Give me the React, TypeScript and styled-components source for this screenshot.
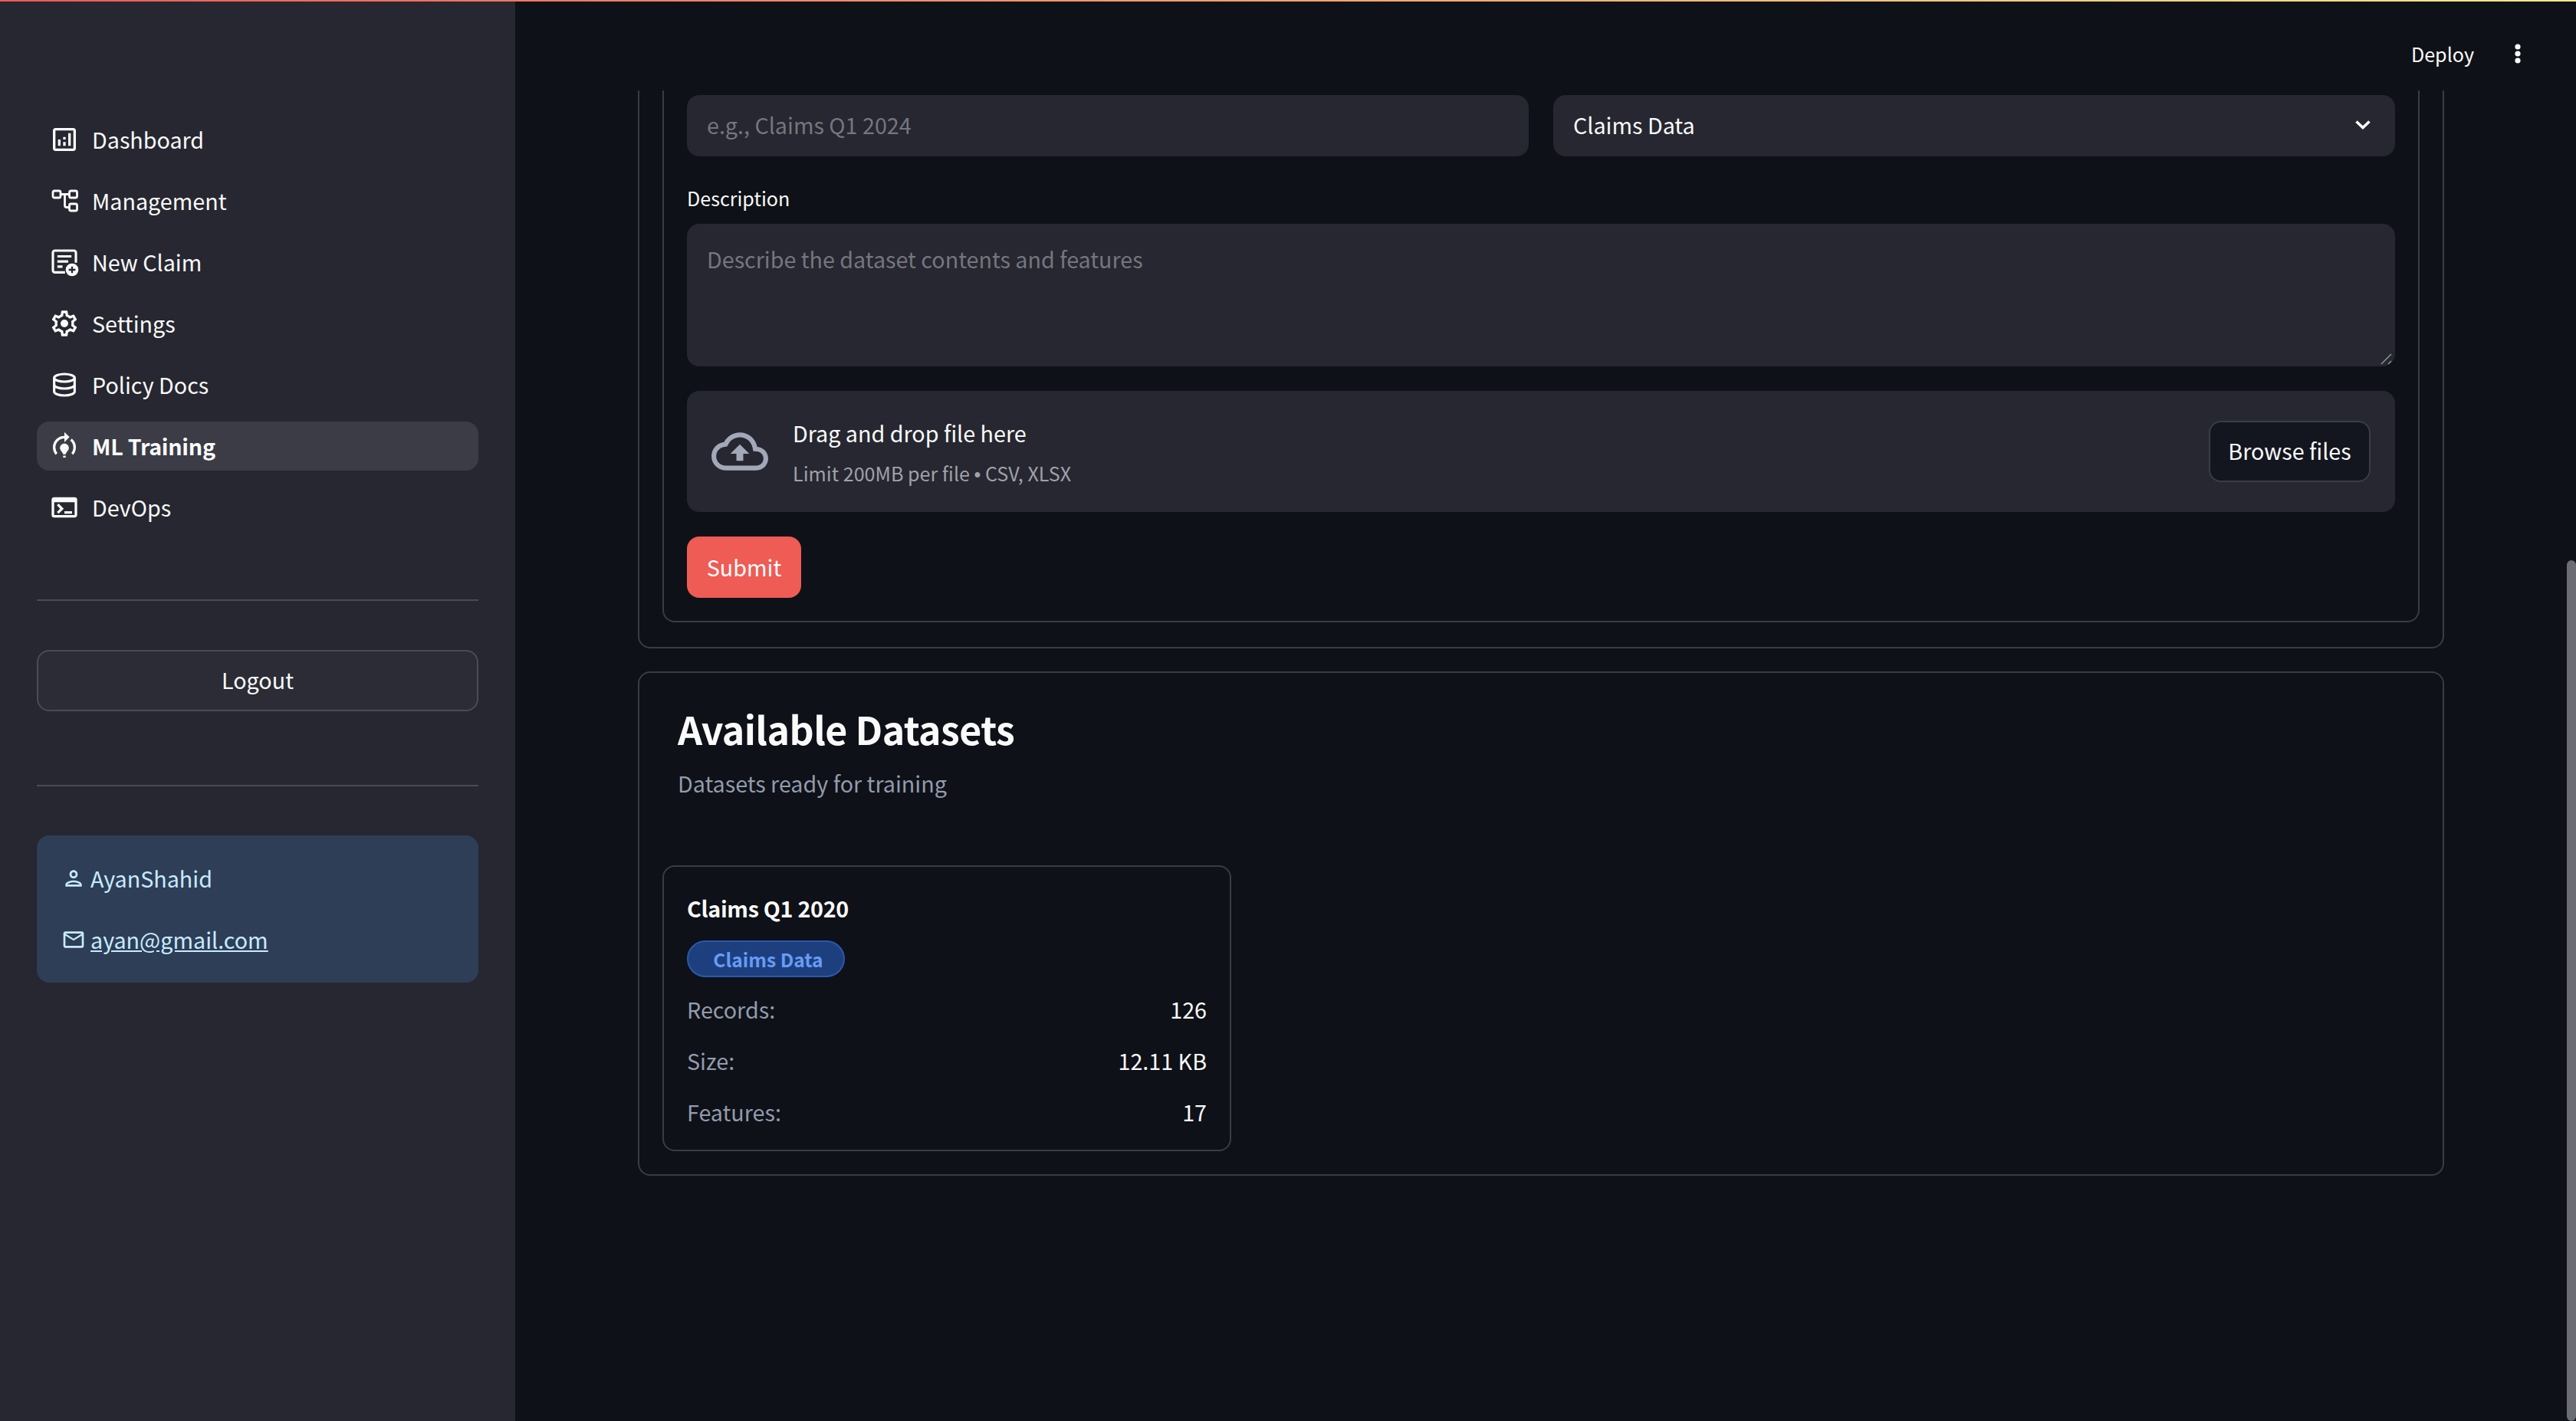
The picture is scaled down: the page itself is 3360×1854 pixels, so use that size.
import React from "react";
import styled, { createGlobalStyle } from "styled-components";
import {
  MdOutlineAnalytics,
  MdOutlineModelTraining,
  MdOutlineTerminal,
  MdOutlinePerson,
  MdMailOutline,
} from "react-icons/md";

const GlobalStyle = createGlobalStyle`
  html, body {
    margin: 0;
    padding: 0;
    background: #0e1117;
  }
  * {
    box-sizing: border-box;
  }
  body {
    font-family: "Noto Sans CJK SC", "Noto Sans", sans-serif;
    color: #fafafa;
  }
`;

function ManagementIcon() {
  return (
    <svg width="40" height="40" viewBox="0 0 40 40" fill="none" stroke="currentColor" strokeWidth="2.8">
      <rect x="5" y="7" width="10" height="9" rx="2" />
      <rect x="26.5" y="7" width="10" height="9" rx="2" />
      <rect x="26.5" y="24" width="10" height="9" rx="2" />
      <path d="M15 11.5H26.5M20.5 11.5V26C20.5 27.6 21.4 28.5 23 28.5H26.5" />
    </svg>
  );
}

function NewClaimIcon() {
  return (
    <svg width="40" height="40" viewBox="0 0 24 24" fill="none">
      <path
        d="M12.5 20H4.5C3.7 20 3 19.3 3 18.5V4.5C3 3.7 3.7 3 4.5 3H19.5C20.3 3 21 3.7 21 4.5V12.5"
        stroke="currentColor"
        strokeWidth="1.9"
      />
      <path d="M6.5 7.5H17.5M6.5 11.5H15M6.5 15.5H10.5" stroke="currentColor" strokeWidth="1.9" />
      <circle cx="18" cy="18" r="5" fill="currentColor" />
      <path d="M18 15.4V20.6M15.4 18H20.6" stroke="#262730" strokeWidth="1.4" />
    </svg>
  );
}

function GearIcon() {
  return (
    <svg width="40" height="40" viewBox="0 0 24 24" fill="currentColor">
      <path d="M19.43 12.98c.04-.32.07-.64.07-.98 0-.34-.03-.66-.07-.98l2.11-1.65c.19-.15.24-.42.12-.64l-2-3.46c-.09-.16-.26-.25-.44-.25-.06 0-.12.01-.17.03l-2.49 1c-.52-.4-1.08-.73-1.69-.98l-.38-2.65C14.46 2.18 14.25 2 14 2h-4c-.25 0-.46.18-.49.42l-.38 2.65c-.61.25-1.17.59-1.69.98l-2.49-1c-.06-.02-.12-.03-.18-.03-.17 0-.34.09-.43.25l-2 3.46c-.13.22-.07.49.12.64l2.11 1.65c-.04.32-.07.65-.07.98 0 .33.03.66.07.98l-2.11 1.65c-.19.15-.24.42-.12.64l2 3.46c.09.16.26.25.44.25.06 0 .12-.01.17-.03l2.49-1c.52.4 1.08.73 1.69.98l.38 2.65c.03.24.24.42.49.42h4c.25 0 .46-.18.49-.42l.38-2.65c.61-.25 1.17-.59 1.69-.98l2.49 1c.06.02.12.03.18.03.17 0 .34-.09.43-.25l2-3.46c.12-.22.07-.49-.12-.64l-2.11-1.65zm-1.98-1.71c.04.31.05.52.05.73 0 .21-.02.43-.05.73l-.14 1.13.89.7 1.08.84-.7 1.21-1.27-.51-1.04-.42-.9.68c-.43.32-.84.56-1.25.73l-1.06.43-.16 1.13-.2 1.35h-1.4l-.19-1.35-.16-1.13-1.06-.43c-.43-.18-.83-.41-1.23-.71l-.91-.7-1.06.43-1.27.51-.7-1.21 1.08-.84.89-.7-.14-1.13c-.03-.31-.05-.54-.05-.74s.02-.43.05-.73l.14-1.13-.89-.7-1.08-.84.7-1.21 1.27.51 1.04.42.9-.68c.43-.32.84-.56 1.25-.73l1.06-.43.16-1.13.2-1.35h1.39l.19 1.35.16 1.13 1.06.43c.43.18.83.41 1.23.71l.91.7 1.06-.43 1.27-.51.7 1.21-1.07.85-.89.7.14 1.13z" />
      <circle cx="12" cy="12" r="3" />
    </svg>
  );
}

function DatabaseIcon() {
  return (
    <svg width="40" height="40" viewBox="0 0 24 24" fill="none" stroke="currentColor" strokeWidth="1.9">
      <ellipse cx="12" cy="6.6" rx="8" ry="3" />
      <path d="M4 6.6V17.4C4 19 7.6 20.4 12 20.4S20 19 20 17.4V6.6" />
      <path d="M4 12C4 13.6 7.6 15 12 15S20 13.6 20 12" />
    </svg>
  );
}

function CloudUploadIcon() {
  return (
    <svg width="74" height="74" viewBox="0 0 24 24" fill="currentColor">
      <path d="M19.35 10.04C18.67 6.59 15.64 4 12 4 9.11 4 6.6 5.64 5.35 8.04 2.34 8.36 0 10.91 0 14c0 3.31 2.69 6 6 6h13c2.76 0 5-2.24 5-5 0-2.64-2.05-4.78-4.65-4.96zM19 18H6c-2.21 0-4-1.79-4-4 0-2.05 1.53-3.76 3.56-3.97l1.07-.11.5-.95C8.08 7.14 9.94 6 12 6c2.62 0 4.88 1.86 5.39 4.43l.3 1.5 1.53.11c1.56.1 2.78 1.41 2.78 2.96 0 1.65-1.35 3-3 3zM8 13h2.55v3h2.9v-3H16l-4-4z" />
    </svg>
  );
}

function ChevronIcon() {
  return (
    <svg width="20" height="13" viewBox="0 0 20 13" fill="none">
      <path d="M1.5 2.5L10 10.5L18.5 2.5" stroke="currentColor" strokeWidth="3.6" />
    </svg>
  );
}

function KebabIcon() {
  return (
    <svg width="10" height="26" viewBox="0 0 10 26" fill="currentColor">
      <circle cx="5" cy="4" r="3.6" />
      <circle cx="5" cy="13" r="3.6" />
      <circle cx="5" cy="22" r="3.6" />
    </svg>
  );
}

function ResizeGrip() {
  return (
    <svg width="16" height="16" viewBox="0 0 16 16" fill="none">
      <path d="M1 15L14 2M10 15L14 11" stroke="#8f9096" strokeWidth="1.5" />
    </svg>
  );
}

const navItems = [
  { label: "Dashboard", icon: <MdOutlineAnalytics size={40} /> },
  { label: "Management", icon: <ManagementIcon /> },
  { label: "New Claim", icon: <NewClaimIcon /> },
  { label: "Settings", icon: <GearIcon /> },
  { label: "Policy Docs", icon: <DatabaseIcon /> },
  { label: "ML Training", icon: <MdOutlineModelTraining size={40} />, active: true },
  { label: "DevOps", icon: <MdOutlineTerminal size={40} /> },
];

const stats = [
  { label: "Records:", value: "126" },
  { label: "Size:", value: "12.11 KB" },
  { label: "Features:", value: "17" },
];

export default function App() {
  return (
    <Page>
      <GlobalStyle />
      <TopStripe />
      <Sidebar>
        <Nav>
          {navItems.map((item) => (
            <NavItem key={item.label} $active={item.active}>
              <NavIcon>{item.icon}</NavIcon>
              {item.label}
            </NavItem>
          ))}
        </Nav>
        <Divider $top={88} />
        <LogoutButton>Logout</LogoutButton>
        <Divider $top={96} />
        <UserBox>
          <UserRow>
            <MdOutlinePerson size={32} />
            AyanShahid
          </UserRow>
          <UserRow>
            <MdMailOutline size={32} />
            <a href="mailto:ayan@gmail.com">ayan@gmail.com</a>
          </UserRow>
        </UserBox>
      </Sidebar>

      <Main>
        <Header>
          <DeployButton>Deploy</DeployButton>
          <MenuButton>
            <KebabIcon />
          </MenuButton>
        </Header>

        <Scroller>
          <Thumb />
          <OuterFrame>
            <FormFrame>
              <FieldRow>
                <TextInput placeholder="e.g., Claims Q1 2024" />
                <SelectBox>
                  Claims Data
                  <ChevronIcon />
                </SelectBox>
              </FieldRow>
              <FieldLabel>Description</FieldLabel>
              <TextAreaWrap>
                <TextArea placeholder="Describe the dataset contents and features" />
                <GripSpot>
                  <ResizeGrip />
                </GripSpot>
              </TextAreaWrap>
              <DropZone>
                <CloudWrap>
                  <CloudUploadIcon />
                </CloudWrap>
                <DropText>
                  <DropTitle>Drag and drop file here</DropTitle>
                  <DropHint>
                    Limit 200MB per file <Bullet>•</Bullet> CSV, XLSX
                  </DropHint>
                </DropText>
                <BrowseButton>Browse files</BrowseButton>
              </DropZone>
              <SubmitButton>Submit</SubmitButton>
            </FormFrame>
          </OuterFrame>

          <DatasetsPanel>
            <PanelTitle>Available Datasets</PanelTitle>
            <PanelSubtitle>Datasets ready for training</PanelSubtitle>
            <DatasetCard>
              <CardTitle>Claims Q1 2020</CardTitle>
              <TypeBadge>Claims Data</TypeBadge>
              {stats.map((s) => (
                <StatRow key={s.label}>
                  <StatLabel>{s.label}</StatLabel>
                  <span>{s.value}</span>
                </StatRow>
              ))}
            </DatasetCard>
          </DatasetsPanel>
        </Scroller>
      </Main>
    </Page>
  );
}

const Page = styled.div`
  position: relative;
  display: flex;
  width: 100vw;
  height: 100vh;
  overflow: hidden;
  background: #0e1117;
`;

const TopStripe = styled.div`
  position: absolute;
  top: 0;
  left: 0;
  right: 0;
  height: 2px;
  background: linear-gradient(90deg, #ee5a55, #fde98a);
`;

const Sidebar = styled.aside`
  flex: 0 0 672px;
  padding: 150px 48px 0;
  background: #262730;
`;

const Nav = styled.nav`
  display: flex;
  flex-direction: column;
  gap: 16px;
`;

const NavItem = styled.div<{ $active?: boolean }>`
  display: flex;
  align-items: center;
  height: 64px;
  padding-left: 16px;
  border-radius: 16px;
  font-size: 28.7px;
  line-height: 38px;
  font-weight: ${(p) => (p.$active ? 700 : 400)};
  letter-spacing: ${(p) => (p.$active ? "-0.3px" : "0")};
  background: ${(p) => (p.$active ? "#3b3c46" : "transparent")};
`;

const NavIcon = styled.span`
  display: flex;
  align-items: center;
  justify-content: center;
  width: 40px;
  height: 40px;
  margin-right: 16px;
`;

const Divider = styled.hr<{ $top: number }>`
  height: 2px;
  margin: ${(p) => p.$top}px 0 64px;
  border: none;
  background: #4a4b55;
`;

const LogoutButton = styled.button`
  display: block;
  width: 100%;
  height: 80px;
  padding: 0 0 4px;
  border: 2px solid #4a4b55;
  border-radius: 16px;
  background: #2b2c36;
  color: #fafafa;
  font: inherit;
  font-size: 28.7px;
`;

const UserBox = styled.div`
  display: flex;
  flex-direction: column;
  gap: 40px;
  height: 192px;
  padding: 36px 32px 0;
  border-radius: 16px;
  background: #2e3e56;
  color: #c7ebff;
  font-size: 28.7px;
  line-height: 40px;

  a {
    color: inherit;
  }
`;

const UserRow = styled.div`
  display: flex;
  align-items: center;
  gap: 6px;
`;

const Main = styled.main`
  flex: 1;
  display: flex;
  flex-direction: column;
  min-width: 0;
`;

const Header = styled.header`
  flex: 0 0 118px;
  display: flex;
  align-items: flex-start;
  justify-content: flex-end;
  padding: 50px 71px 0 0;
`;

const DeployButton = styled.span`
  font-size: 25.1px;
  line-height: 40px;
`;

const MenuButton = styled.span`
  display: flex;
  align-items: center;
  height: 40px;
  margin-left: 52px;
`;

const Scroller = styled.div`
  position: relative;
  flex: 1;
  overflow: hidden;
  padding: 0 172px 0 160px;
`;

const Thumb = styled.div`
  position: absolute;
  top: 613px;
  right: 0;
  width: 12px;
  height: 1123px;
  border-radius: 6px;
  background: #6b6d72;
`;

const OuterFrame = styled.section`
  padding: 0 30px 32px;
  border: 2px solid #3a3c44;
  border-top: none;
  border-radius: 0 0 16px 16px;
`;

const FormFrame = styled.form`
  padding: 6px 30px 30px;
  border: 2px solid #3a3c44;
  border-top: none;
  border-radius: 0 0 16px 16px;
`;

const FieldRow = styled.div`
  display: grid;
  grid-template-columns: 1fr 1fr;
  gap: 32px;
`;

const TextInput = styled.input`
  height: 80px;
  padding: 0 26px 4px;
  border: none;
  border-radius: 16px;
  background: #262730;
  color: #fafafa;
  font: inherit;
  font-size: 28.7px;
  outline: none;

  &::placeholder {
    color: #75767d;
  }
`;

const SelectBox = styled.div`
  display: flex;
  align-items: center;
  justify-content: space-between;
  height: 80px;
  padding: 0 32px 4px 26px;
  border-radius: 16px;
  background: #262730;
  font-size: 28.7px;
`;

const FieldLabel = styled.label`
  display: block;
  margin: 38px 0 18px;
  font-size: 25.1px;
  line-height: 32px;
`;

const TextAreaWrap = styled.div`
  position: relative;
`;

const TextArea = styled.textarea`
  display: block;
  width: 100%;
  height: 186px;
  padding: 24px 26px;
  border: none;
  border-radius: 16px;
  background: #262730;
  color: #fafafa;
  font: inherit;
  font-size: 28.7px;
  line-height: 44px;
  outline: none;
  resize: none;

  &::placeholder {
    color: #75767d;
  }
`;

const GripSpot = styled.span`
  position: absolute;
  right: 3px;
  bottom: 2px;
  display: flex;
`;

const DropZone = styled.div`
  display: flex;
  align-items: center;
  height: 158px;
  margin-top: 32px;
  padding: 0 32px;
  border-radius: 16px;
  background: #262730;
`;

const CloudWrap = styled.span`
  display: flex;
  margin-right: 32px;
  color: #a3a8b8;
`;

const DropText = styled.div`
  flex: 1;
  display: flex;
  flex-direction: column;
  gap: 8px;
  padding-top: 5px;
`;

const DropTitle = styled.span`
  font-size: 28.7px;
  line-height: 44px;
`;

const DropHint = styled.span`
  font-size: 25.1px;
  line-height: 44px;
  color: #a0a1a9;
`;

const Bullet = styled.span`
  font-family: "Liberation Sans", sans-serif;
`;

const BrowseButton = styled.button`
  width: 211px;
  height: 80px;
  padding: 0 0 4px;
  border: 2px solid #3a3c46;
  border-radius: 16px;
  background: #13161f;
  color: #fafafa;
  font: inherit;
  font-size: 28.7px;
`;

const SubmitButton = styled.button`
  display: block;
  width: 149px;
  height: 80px;
  padding: 0 0 2px;
  margin-top: 32px;
  border: none;
  border-radius: 16px;
  background: #ef5b55;
  color: #fff;
  font: inherit;
  font-size: 28.7px;
`;

const DatasetsPanel = styled.section`
  margin-top: 30px;
  height: 658px;
  padding: 36px 30px 30px;
  border: 2px solid #3a3c44;
  border-radius: 16px;
`;

const PanelTitle = styled.h2`
  margin: 0 0 0 20px;
  font-size: 50px;
  line-height: 72px;
  font-weight: 700;
  letter-spacing: -0.57px;
`;

const PanelSubtitle = styled.p`
  margin: 14px 0 0 20px;
  font-size: 28.7px;
  line-height: 44px;
  color: #929bad;
`;

const DatasetCard = styled.div`
  width: 742px;
  height: 373px;
  margin-top: 85px;
  padding: 30px;
  border: 2px solid #3a3c44;
  border-radius: 16px;
`;

const CardTitle = styled.div`
  font-size: 28.7px;
  line-height: 48px;
  font-weight: 700;
  letter-spacing: -0.3px;
`;

const TypeBadge = styled.div`
  display: flex;
  align-items: center;
  justify-content: center;
  width: 206px;
  height: 48px;
  margin: 18px 0 8px;
  padding-left: 6px;
  border: 2px solid #2a59ad;
  border-radius: 24px;
  background: #1e3f7e;
  color: #669cf5;
  font-size: 24.6px;
  font-weight: 700;
`;

const StatRow = styled.div`
  display: flex;
  justify-content: space-between;
  align-items: center;
  height: 67px;
  font-size: 28.7px;
`;

const StatLabel = styled.span`
  color: #929bad;
`;
